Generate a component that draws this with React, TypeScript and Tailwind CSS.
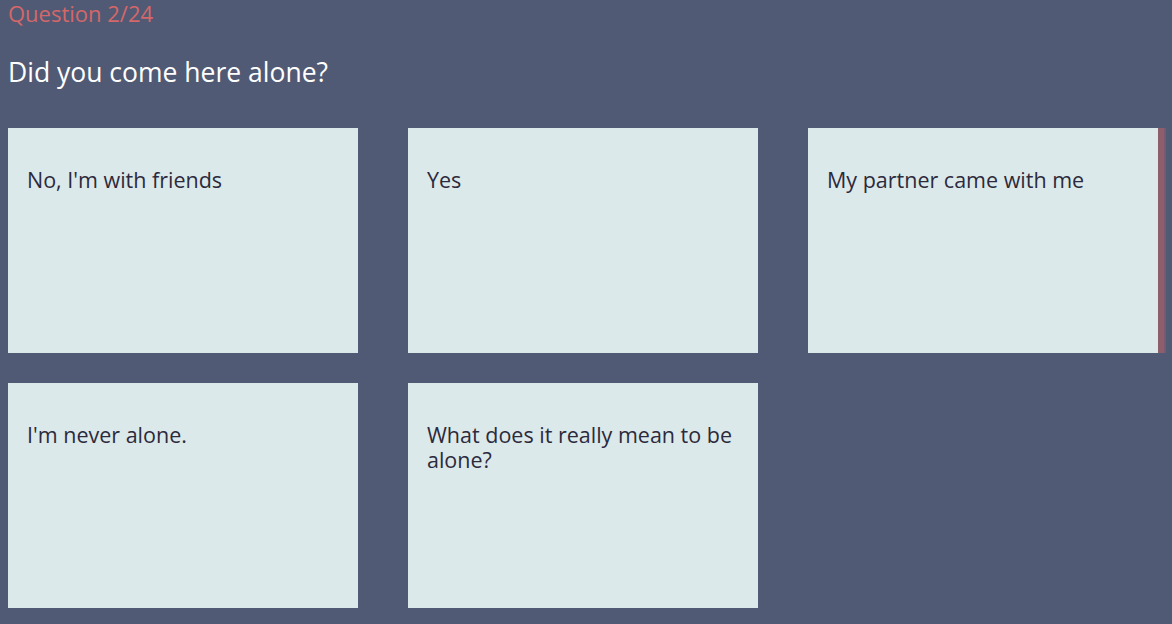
const answers = [
  "No, I'm with friends",
  'Yes',
  'My partner came with me',
  "I'm never alone.",
  'What does it really mean to be alone?',
]

export default function App() {
  return (
    <div
      className="min-h-[624px] w-full bg-[#515a74] px-2 text-[#dde9ea]"
      style={{ fontFamily: '"Open Sans", "Noto Sans", sans-serif' }}
    >
      <div className="text-[22px] leading-[27px] text-[#d4676a]">Question 2/24</div>
      <h1 className="mt-[27px] text-[26.5px] leading-[36px] text-white">Did you come here alone?</h1>
      <div className="mt-[38px] grid grid-cols-[350px_350px_350px] gap-x-[50px] gap-y-[30px]">
        {answers.map((a, i) => (
          <button
            key={a}
            type="button"
            className={
              'relative flex h-[225px] w-[350px] items-start bg-[#dce9ea] px-[19px] pt-[39px] text-left text-[21.5px] leading-[25px] text-[#2c2a3c]' +
              (i === 2 ? ' shadow-[6px_0_0_0_#8d5e6b,8px_0_0_0_#7b596c]' : '')
            }
          >
            {a}
          </button>
        ))}
      </div>
    </div>
  )
}
